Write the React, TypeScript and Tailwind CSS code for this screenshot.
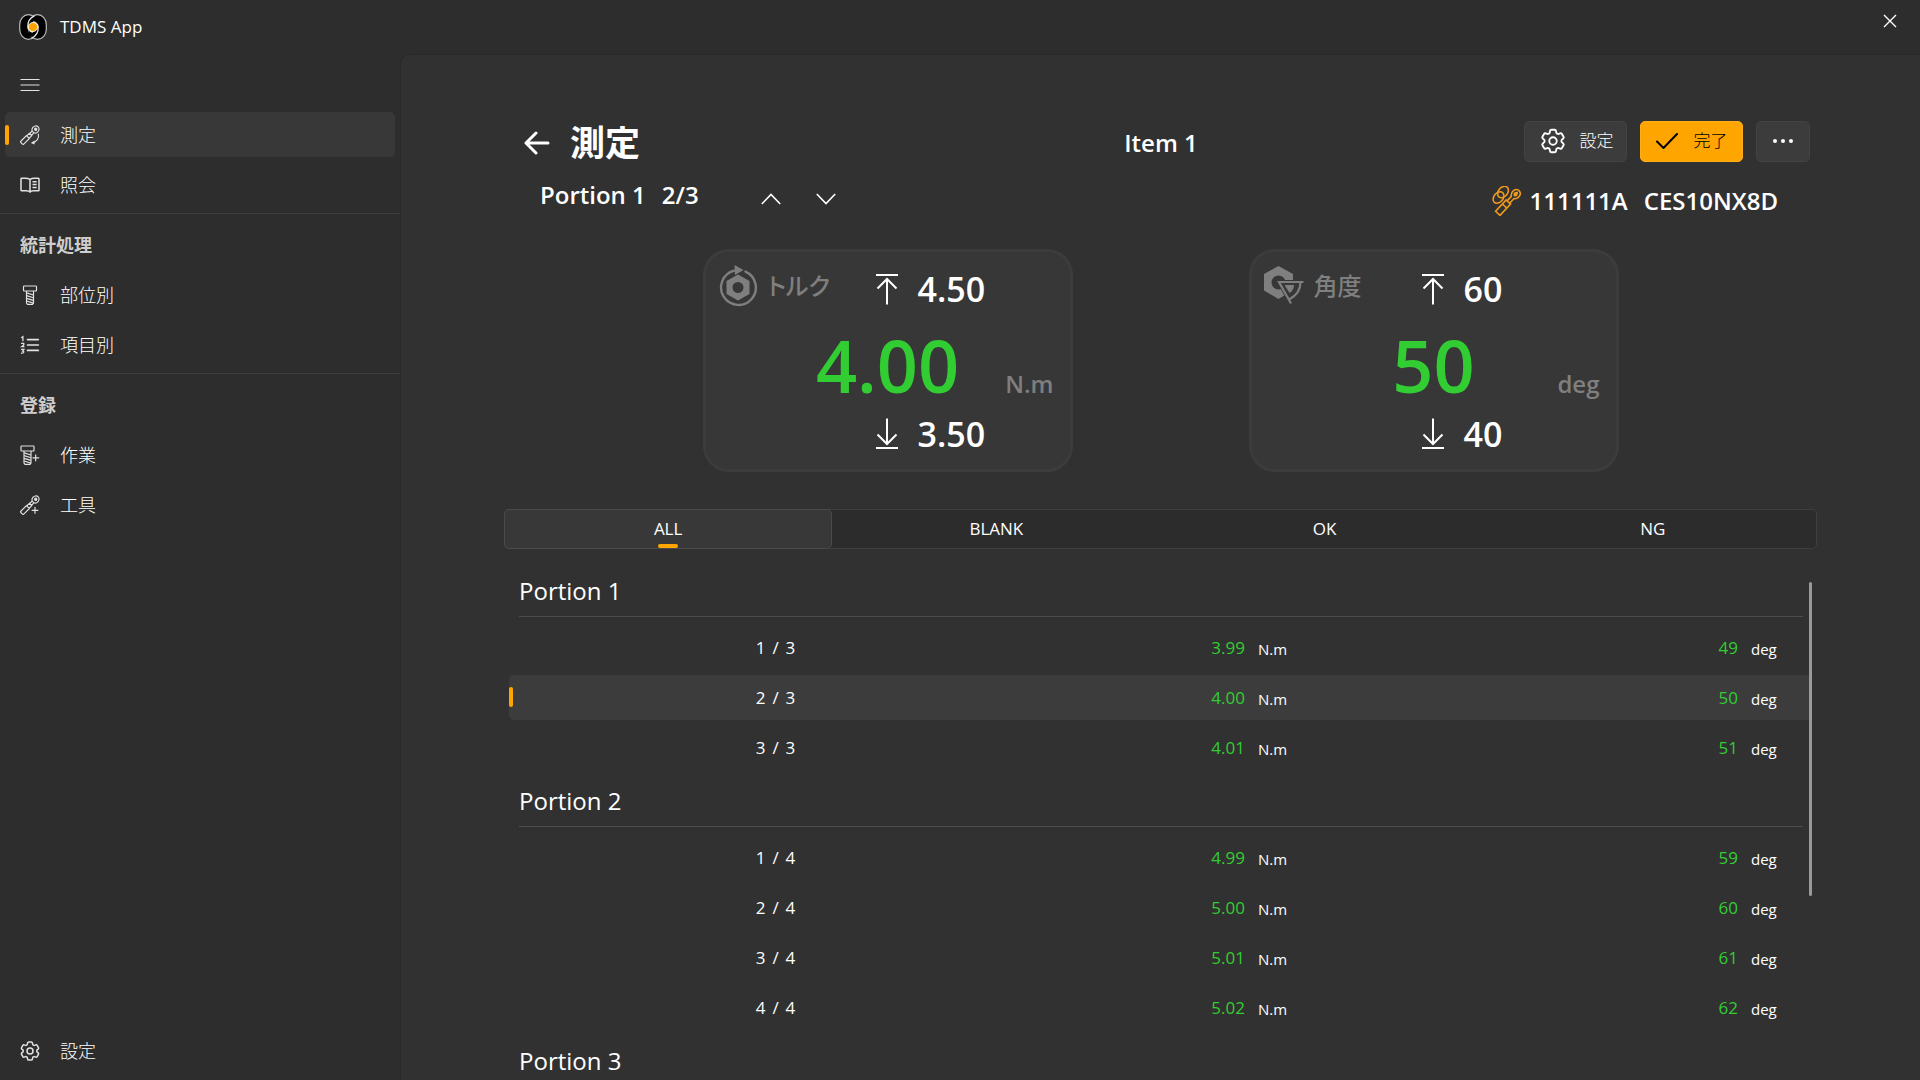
import { useState } from "react";
import type { ReactNode } from "react";
import clsx from "clsx";
import { HiOutlineCog6Tooth } from "react-icons/hi2";

interface IconProps {
  className?: string;
}

interface Row {
  label: [number, number];
  torque: string;
  angle: string;
}

interface Portion {
  name: string;
  rows: Row[];
}

const portions: Portion[] = [
  {
    name: "Portion 1",
    rows: [
      { label: [1, 3], torque: "3.99", angle: "49" },
      { label: [2, 3], torque: "4.00", angle: "50" },
      { label: [3, 3], torque: "4.01", angle: "51" },
    ],
  },
  {
    name: "Portion 2",
    rows: [
      { label: [1, 4], torque: "4.99", angle: "59" },
      { label: [2, 4], torque: "5.00", angle: "60" },
      { label: [3, 4], torque: "5.01", angle: "61" },
      { label: [4, 4], torque: "5.02", angle: "62" },
    ],
  },
  { name: "Portion 3", rows: [] },
];

const tabs = ["ALL", "BLANK", "OK", "NG"];

function Logo() {
  return (
    <svg viewBox="0 0 28 26" className="h-[26px] w-7" aria-hidden="true">
      <rect x="0.7" y="0.7" width="17.5" height="24.6" rx="8.7" ry="10" fill="#000" stroke="#b9b9b9" strokeWidth="1.2" />
      <rect x="9.8" y="0.7" width="17.5" height="24.6" rx="8.7" ry="10" fill="#000" stroke="#b9b9b9" strokeWidth="1.2" />
      <path d="M9.8 4.500 14 2.500l4.200 2v17L14 23.500l-4.200-2z" fill="#000" />
      <path
        d="M15.500 1.800C10.500 4 8.600 8 8.800 13c.2 3 2.500 5 5.200 5M12.500 24.200c5-2.200 6.900-6.200 6.700-11.200-.2-3-2.500-5-5.200-5"
        fill="none"
        stroke="#e8e8e8"
        strokeWidth="1.3"
      />
      <circle cx="14" cy="13" r="4.6" fill="#ffa500" stroke="#fff" strokeWidth="0.8" />
    </svg>
  );
}

function WrenchShape() {
  return (
    <g transform="rotate(45 12 12)">
      <path d="M9.5 15.5h5v9.2a1.5 1.5 0 0 1-1.5 1.5h-2a1.5 1.5 0 0 1-1.5-1.5z" />
      <path d="M10 15.5V11h4v4.5M10.5 11V6.6M13.5 11V6.6" />
      <path d="M10.5 6.8a4 4.5 0 1 1 3 0z" />
      <circle cx="12" cy="2.3" r="1.3" fill="currentColor" />
    </g>
  );
}

function MeasureIcon({ className }: IconProps) {
  return (
    <svg viewBox="0 0 24 24" className={className} fill="none" stroke="currentColor" strokeWidth="1.4" aria-hidden="true">
      <WrenchShape />
      <path d="M22 10.5c1 5-1.5 9.5-7 11" />
      <path d="m17.5 18.5-4.5 3 4.5 2z" fill="currentColor" stroke="none" />
    </svg>
  );
}

function ToolAddIcon({ className }: IconProps) {
  return (
    <svg viewBox="0 0 24 24" className={className} fill="none" stroke="currentColor" strokeWidth="1.4" aria-hidden="true">
      <WrenchShape />
      <path d="M18 14.5v8M14 18.5h8" />
    </svg>
  );
}

function ToolLinkIcon({ className }: IconProps) {
  return (
    <svg viewBox="0 0 30 30" className={className} fill="none" stroke="currentColor" strokeWidth="1.6" aria-hidden="true">
      <ellipse cx="6.5" cy="11.5" rx="6.4" ry="4.6" transform="rotate(-50 6.5 11.5)" />
      <ellipse cx="11" cy="6" rx="6.4" ry="4.6" transform="rotate(-50 11 6)" />
      <g transform="rotate(43 15 17.5)">
        <path d="M12 15.5h6V31h-6zM12 21h6M13.3 15.5V9.400C9.500 6.500 10.300 0 15 0s5.500 6.500 1.700 9.400v6.100" />
        <path d="M15 1.500c3 2.500 2.500 5 0 6-2.500-1-3-3.500 0-6z" fill="currentColor" stroke="none" />
      </g>
    </svg>
  );
}

function BookIcon({ className }: IconProps) {
  return (
    <svg
      viewBox="0 0 24 24"
      className={className}
      fill="none"
      stroke="currentColor"
      strokeWidth="1.8"
      strokeLinejoin="round"
      aria-hidden="true"
    >
      <path d="M12 5.5C10.5 4.3 8.5 4 6.5 4H2a.8.8 0 0 0-.8.8v13.4c0 .5.3.8.8.8h5.5c2 0 3.5.3 4.5 1.5 1-1.2 2.5-1.500 4.500-1.500H22c.5 0 .8-.3.8-.8V4.800A.8.8 0 0 0 22 4h-4.500c-2 0-4 .3-5.500 1.500zM12 5.500v15" />
      <path d="M15 8h5M15 11.5h5M15 15h5" />
    </svg>
  );
}

function BoltShape() {
  return (
    <>
      <path d="M4 1.2h14a.8.8 0 0 1 .8.8v4.400a.8.8 0 0 1-.8.8H4a.8.8 0 0 1-.8-.8V2a.8.8 0 0 1 .8-.8zM6.800 7.200v14.500l1.200 1.500h6l1.200-1.500V7.200" />
      <path d="m7 9.5 8 2.5M7 12.8l8 2.5M7 16l8 2.5M7 19.2l8 2.5" />
    </>
  );
}

function BoltIcon({ className }: IconProps) {
  return (
    <svg viewBox="-1 0 24 24" className={className} fill="none" stroke="currentColor" strokeWidth="1.4" aria-hidden="true">
      <BoltShape />
    </svg>
  );
}

function BoltAddIcon({ className }: IconProps) {
  return (
    <svg viewBox="2 0 24 24" className={className} fill="none" stroke="currentColor" strokeWidth="1.4" aria-hidden="true">
      <BoltShape />
      <path d="M20.8 11.5v8M17 15.5h8" />
    </svg>
  );
}

function ListIcon({ className }: IconProps) {
  return (
    <svg
      viewBox="0 0 24 24"
      className={className}
      fill="none"
      stroke="currentColor"
      strokeWidth="2"
      strokeLinecap="round"
      aria-hidden="true"
    >
      <path d="M9 5.5h13M9 12h13M9 18.5h13" />
      <path d="m2 3 1.5-1v5M1.8 10h2.7v2L2 14h2.7M1.8 17.2h2.900l-1.500 2c2 0 2 3-1.400 2.600" strokeWidth="1.5" />
    </svg>
  );
}

function TorqueIcon({ className }: IconProps) {
  return (
    <svg viewBox="0 0 40 42" className={className} aria-hidden="true">
      <path d="M27.5 6.6A17.4 17.4 0 1 1 16 5.7" fill="none" stroke="currentColor" strokeWidth="2.4" strokeLinecap="round" />
      <path d="m16.500 0 9 5-8.500 5z" fill="currentColor" />
      <path
        fillRule="evenodd"
        fill="currentColor"
        d="m20 9.500 11.500 6.500v13L20 35.500 8.500 29V16zM20 17a5.500 5.500 0 1 0 0 11 5.500 5.500 0 0 0 0-11z"
      />
    </svg>
  );
}

function AngleIcon({ className }: IconProps) {
  return (
    <svg viewBox="0 0 40 42" className={className} aria-hidden="true">
      <path
        fillRule="evenodd"
        fill="currentColor"
        d="M14.500 1 29 9v16.500L14.500 34 0 25.500V9zM14.500 10.500a7 7 0 1 0 0 14 7 7 0 0 0 0-14z"
      />
      <path d="M39 17H15l12 21c7-5 10.500-12 10.500-21" fill="#373737" stroke="#373737" strokeWidth="4" />
      <path d="M39.500 17H15l12 21.500M36.500 17c0 7-3.500 13.500-11.500 17.500" fill="none" stroke="currentColor" strokeWidth="2.2" />
      <path d="M20.500 20h9.500c0 3.500-1.500 6-4.500 8z" fill="currentColor" />
    </svg>
  );
}

function LimitIcon({ upper }: { upper?: boolean }) {
  return (
    <svg
      viewBox="0 0 22 32"
      className={clsx("h-8 w-[22px]", !upper && "rotate-180")}
      fill="none"
      stroke="currentColor"
      strokeWidth="2"
      aria-hidden="true"
    >
      <path d="M0 2h22M11 31.5V6M1.5 15.5 11 6l9.500 9.500" />
    </svg>
  );
}

interface NavItemProps {
  icon: ReactNode;
  label: string;
  active?: boolean;
}

function NavItem({ icon, label, active }: NavItemProps) {
  return (
    <a
      href="#"
      aria-current={active ? "page" : undefined}
      className={clsx(
        "relative mx-[5px] flex h-[45px] items-center gap-5 rounded-[5px] pl-[15px] hover:bg-[#383838]",
        active && "bg-[#383838]",
      )}
    >
      {active && <span className="absolute top-[13px] left-0 h-5 w-1 rounded-sm bg-[#ffa500]" />}
      <span className="flex w-5 justify-center text-[#e2e2e2]">{icon}</span>
      <span className="font-light">{label}</span>
    </a>
  );
}

function NavHeader({ children }: { children: ReactNode }) {
  return <h2 className="flex h-[45px] items-center pl-5 font-bold text-[#cfcfcf]">{children}</h2>;
}

function Sidebar() {
  return (
    <nav className="flex w-[400px] shrink-0 flex-col gap-[5px] pt-2 pb-[7px] text-lg">
      <button type="button" aria-label="メニュー" className="flex h-[45px] w-[60px] items-center justify-center">
        <svg viewBox="0 0 20 14" className="h-3.5 w-5" stroke="#e2e2e2" strokeWidth="1.2" aria-hidden="true">
          <path d="M.5 1.5h19M.5 7h19M.5 12.5h19" />
        </svg>
      </button>
      <NavItem icon={<MeasureIcon className="size-5" />} label="測定" active />
      <NavItem icon={<BookIcon className="size-5" />} label="照会" />
      <hr className="mt-px mb-[3px] border-[#3d3d3d]" />
      <NavHeader>統計処理</NavHeader>
      <NavItem icon={<BoltIcon className="size-5" />} label="部位別" />
      <NavItem icon={<ListIcon className="size-5" />} label="項目別" />
      <hr className="mt-px mb-[3px] border-[#3d3d3d]" />
      <NavHeader>登録</NavHeader>
      <NavItem icon={<BoltAddIcon className="size-5" />} label="作業" />
      <NavItem icon={<ToolAddIcon className="size-5" />} label="工具" />
      <div className="mt-auto">
        <NavItem icon={<HiOutlineCog6Tooth className="size-6 shrink-0" />} label="設定" />
      </div>
    </nav>
  );
}

function Header() {
  return (
    <header className="pr-[7px] pl-5">
      <div className="grid h-[50px] grid-cols-[1fr_auto_1fr] items-center">
        <div className="flex items-center gap-5">
          <button type="button" aria-label="戻る">
            <svg
              viewBox="0 0 26 24"
              className="h-6 w-[26px]"
              fill="none"
              stroke="currentColor"
              strokeWidth="3"
              strokeLinecap="round"
              strokeLinejoin="round"
              aria-hidden="true"
            >
              <path d="M24 12H2M12 2 2 12l10 10" />
            </svg>
          </button>
          <h1 className="text-[35px] leading-[50px] font-bold">測定</h1>
        </div>
        <p className="pr-3 text-2xl font-semibold">Item 1</p>
        <div className="flex justify-end gap-[13px] pb-1 font-light">
          <button
            type="button"
            className="flex h-[41px] w-[103px] items-center justify-center gap-3 rounded-[5px] border border-[#434343] bg-[#3c3c3c]"
          >
            <HiOutlineCog6Tooth className="size-[30px]" />
            設定
          </button>
          <button
            type="button"
            className="flex h-[41px] w-[103px] items-center justify-center gap-4 rounded-[5px] border border-[#ffae1a] bg-[#ffa500] text-black"
          >
            <svg viewBox="0 0 22 16" className="h-4 w-[22px]" fill="none" stroke="currentColor" strokeWidth="2" strokeLinecap="round" aria-hidden="true">
              <path d="m1 8.5 6.500 6.500L21 1" />
            </svg>
            完了
          </button>
          <button
            type="button"
            aria-label="その他"
            className="flex h-[41px] w-[54px] items-center justify-center rounded-[5px] border border-[#434343] bg-[#3c3c3c]"
          >
            <svg viewBox="0 0 20 4" className="h-1 w-5" fill="currentColor" aria-hidden="true">
              <circle cx="2" cy="2" r="2" />
              <circle cx="10" cy="2" r="2" />
              <circle cx="18" cy="2" r="2" />
            </svg>
          </button>
        </div>
      </div>

      <div className="mt-[5px] flex items-center justify-between pr-8 pl-4 text-2xl font-semibold">
        <div className="flex items-center">
          <span>Portion 1</span>
          <span className="ml-4">2/3</span>
          <button type="button" aria-label="前へ" className="ml-12 flex h-10 w-[55px] items-center pt-2 pl-3.5">
            <svg viewBox="0 0 20 12" className="h-3 w-5" fill="none" stroke="currentColor" strokeWidth="1.6" aria-hidden="true">
              <path d="m.8 11 9.200-9.500L19.200 11" />
            </svg>
          </button>
          <button type="button" aria-label="次へ" className="flex h-10 w-[55px] items-center pt-2 pl-3.5">
            <svg viewBox="0 0 20 12" className="h-3 w-5" fill="none" stroke="currentColor" strokeWidth="1.6" aria-hidden="true">
              <path d="m.8 1 9.200 9.500L19.200 1" />
            </svg>
          </button>
        </div>
        <div className="flex items-center pt-3">
          <ToolLinkIcon className="size-[30px] text-[#f09a1c]" />
          <span className="ml-2">111111A</span>
          <span className="ml-4">CES10NX8D</span>
        </div>
      </div>
    </header>
  );
}

interface GaugeProps {
  icon: ReactNode;
  label: string;
  value: string;
  unit: string;
  upper: string;
  lower: string;
}

function Gauge({ icon, label, value, unit, upper, lower }: GaugeProps) {
  return (
    <section className="flex h-[223px] w-[370px] flex-col rounded-[26px] border-[3px] border-[#3c3c3c] bg-[#373737] pt-3">
      <div className="flex h-[50px] items-center text-[34px] font-semibold">
        <div className="flex w-[170px] items-center gap-2.5 pb-1.5 pl-3 text-[#7f7f7f]">
          {icon}
          <span className="text-2xl font-medium [font-feature-settings:'palt']">{label}</span>
        </div>
        <LimitIcon upper />
        <span className="ml-5">{upper}</span>
      </div>
      <div className="grid h-[102px] grid-cols-[1fr_auto_1fr] items-baseline px-4">
        <span />
        <span className="text-[72px] leading-[102px] font-semibold text-[#32cd32]">{value}</span>
        <span className="text-right text-2xl font-semibold text-[#7f7f7f]">{unit}</span>
      </div>
      <div className="flex h-9 items-center pl-[170px] text-[34px] font-semibold">
        <LimitIcon />
        <span className="ml-5">{lower}</span>
      </div>
    </section>
  );
}

function Tabs() {
  const [selected, setSelected] = useState("ALL");

  return (
    <div role="tablist" className="mt-[37px] grid h-10 shrink-0 grid-cols-4 rounded-[5px] bg-[#2c2c2c] inset-ring inset-ring-[#3f3f3f]">
      {tabs.map((tab) => {
        const active = tab === selected;
        return (
          <button
            key={tab}
            type="button"
            role="tab"
            aria-selected={active}
            onClick={() => setSelected(tab)}
            className={clsx(
              "relative flex items-center justify-center rounded-[5px] border",
              active ? "border-[#4a4a4a] bg-[#383838]" : "border-transparent",
            )}
          >
            {tab}
            {active && <span className="absolute bottom-0 h-1 w-5 rounded-sm bg-[#ffa500]" />}
          </button>
        );
      })}
    </div>
  );
}

function PortionGroup({ name, rows }: Portion) {
  return (
    <section>
      <h2 className="mr-1.5 mb-[3px] ml-2.5 flex h-[52px] items-center border-b border-[#4d4d4d] text-2xl">{name}</h2>
      {rows.length > 0 && (
        <table aria-label={name} className="w-full table-fixed border-separate border-spacing-x-0 border-spacing-y-[5px]">
          <colgroup>
            <col className="w-[41%]" />
            <col className="w-[203px]" />
            <col />
            <col className="w-[100px]" />
            <col className="w-[71px]" />
          </colgroup>
          <tbody>
            {rows.map(({ label, torque, angle }) => {
              const current = name === "Portion 1" && label[0] === 2;
              return (
                <tr key={torque} className="h-[45px]">
                  <td className={clsx("relative rounded-l-[5px] p-0", current && "bg-[#3c3c3c]")}>
                    {current && <span className="absolute top-3 left-0 h-5 w-1 rounded-sm bg-[#ffa500]" />}
                    <div className="flex justify-center gap-[7px]">
                      <span>{label[0]}</span>
                      <span>/</span>
                      <span>{label[1]}</span>
                    </div>
                  </td>
                  <td className={clsx("p-0 text-right text-[#32cd32]", current && "bg-[#3c3c3c]")}>{torque}</td>
                  <td className={clsx("p-0 pt-1 pl-[13px] text-[15px]", current && "bg-[#3c3c3c]")}>N.m</td>
                  <td className={clsx("p-0 text-right text-[#32cd32]", current && "bg-[#3c3c3c]")}>{angle}</td>
                  <td className={clsx("p-0 pt-1 pl-[13px] text-[15px]", current && "bg-[#3c3c3c]")}>deg</td>
                </tr>
              );
            })}
          </tbody>
        </table>
      )}
    </section>
  );
}

export default function App() {
  return (
    <div className="flex h-screen flex-col overflow-hidden bg-[#2d2d2d] font-['Open_Sans','Noto_Sans_CJK_JP',sans-serif] text-[17px] text-white">
      <div className="flex h-[54px] shrink-0 items-center pl-[19px]">
        <Logo />
        <span className="ml-[13px]">TDMS App</span>
        <button type="button" aria-label="閉じる" className="mb-3 ml-auto flex h-10 w-[60px] items-center justify-center">
          <svg viewBox="0 0 14 14" className="size-3.5" stroke="currentColor" strokeWidth="1.4" aria-hidden="true">
            <path d="m1 1 12 12M13 1 1 13" />
          </svg>
        </button>
      </div>

      <div className="flex min-h-0 flex-1">
        <Sidebar />
        <main className="flex min-w-0 flex-1 flex-col rounded-tl-[10px] border-t border-l border-[#2a2a2a] bg-[#313131] px-[103px] pt-[63px]">
          <Header />
          <div className="mt-8 flex justify-center gap-44">
            <Gauge icon={<TorqueIcon className="h-[42px] w-10" />} label="トルク" value="4.00" unit="N.m" upper="4.50" lower="3.50" />
            <Gauge icon={<AngleIcon className="h-[42px] w-10" />} label="角度" value="50" unit="deg" upper="60" lower="40" />
          </div>
          <Tabs />
          <div className="relative mt-4 min-h-0 flex-1 overflow-hidden pr-2 pl-[5px]">
            {portions.map((portion) => (
              <PortionGroup key={portion.name} {...portion} />
            ))}
            <span className="absolute top-[17px] right-[5px] h-[314px] w-[3px] rounded-full bg-[#9a9a9a]" />
          </div>
        </main>
      </div>
    </div>
  );
}
